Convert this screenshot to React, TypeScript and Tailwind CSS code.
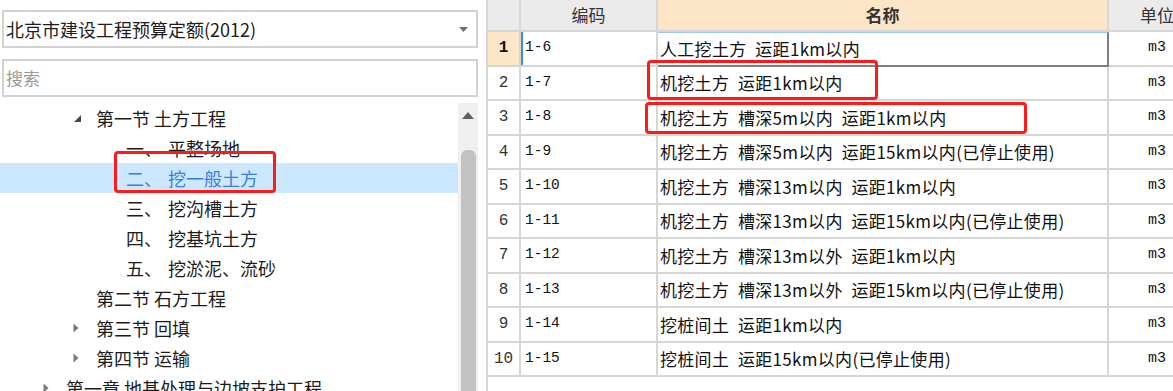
import React from 'react'

// 左侧定额树 + 右侧定额子目表
const cjk = "font-['Noto_Sans_CJK_SC','Noto_Sans',sans-serif]"
const mono = "font-['Liberation_Mono','Noto_Sans_CJK_SC',monospace]"

interface TreeItem {
  indent: number
  arrow?: 'open' | 'closed'
  prefix?: string
  label: string
  selected?: boolean
}

const tree: TreeItem[] = [
  { indent: 96, arrow: 'open', label: '第一节 土方工程' },
  { indent: 126, prefix: '一、', label: '平整场地' },
  { indent: 126, prefix: '二、', label: '挖一般土方', selected: true },
  { indent: 126, prefix: '三、', label: '挖沟槽土方' },
  { indent: 126, prefix: '四、', label: '挖基坑土方' },
  { indent: 126, prefix: '五、', label: '挖淤泥、流砂' },
  { indent: 96, label: '第二节 石方工程' },
  { indent: 96, arrow: 'closed', label: '第三节 回填' },
  { indent: 96, arrow: 'closed', label: '第四节 运输' },
  { indent: 66, arrow: 'closed', label: '第一章 地基处理与边坡支护工程' },
]

const rows = [
  ['1-6', '人工挖土方 运距1km以内'],
  ['1-7', '机挖土方 运距1km以内'],
  ['1-8', '机挖土方 槽深5m以内 运距1km以内'],
  ['1-9', '机挖土方 槽深5m以内 运距15km以内(已停止使用)'],
  ['1-10', '机挖土方 槽深13m以内 运距1km以内'],
  ['1-11', '机挖土方 槽深13m以内 运距15km以内(已停止使用)'],
  ['1-12', '机挖土方 槽深13m以外 运距1km以内'],
  ['1-13', '机挖土方 槽深13m以外 运距15km以内(已停止使用)'],
  ['1-14', '挖桩间土 运距1km以内'],
  ['1-15', '挖桩间土 运距15km以内(已停止使用)'],
]

function TreeRow({ item }: { item: TreeItem }) {
  return (
    <div
      className={`relative h-[30px] flex items-center text-[18px] whitespace-nowrap ${
        item.selected ? 'bg-[#cce8ff] text-[#3b7fd9]' : 'text-[#1c1c1c]'
      }`}
      style={{ paddingLeft: item.indent }}
    >
      {item.arrow === 'open' && (
        <svg className="absolute" style={{ left: item.indent - 23, top: 11 }} width="9" height="9" viewBox="0 0 9 9">
          <path d="M8 1 L8 8 L1 8 Z" fill="#4a4a4a" />
        </svg>
      )}
      {item.arrow === 'closed' && (
        <svg className="absolute" style={{ left: item.indent - 23, top: 10 }} width="6" height="10" viewBox="0 0 6 10">
          <path d="M0.5 0.5 L5.5 5 L0.5 9.5 Z" fill="#7a7a7a" />
        </svg>
      )}
      {item.prefix && <span className="w-[42px]">{item.prefix}</span>}
      <span>{item.label}</span>
    </div>
  )
}

export default function App() {
  return (
    <div className={`w-[1173px] h-[391px] overflow-hidden bg-white flex ${cjk}`}>
      {/* 左侧面板 */}
      <div className="w-[488px] shrink-0 flex flex-col">
        <div className="ml-[2px] mt-[10px] w-[476px] h-[38px] border-2 border-[#d2d2d2] flex items-center justify-between pl-[2px] pr-[8px]">
          <span className="text-[18px] text-[#1c1c1c] whitespace-nowrap">北京市建设工程预算定额(2012)</span>
          <svg width="9" height="5" viewBox="0 0 9 5">
            <path d="M0 0 L9 0 L4.5 5 Z" fill="#707070" />
          </svg>
        </div>
        <div className="ml-[2px] mt-[11px] w-[476px] h-[38px] border-2 border-[#d2d2d2] flex items-center pl-[2px]">
          <span className="text-[17px] text-[#9a9a9a]">搜索</span>
        </div>
        <div className="mt-[6px] flex flex-1 min-h-0">
          <div className="relative w-[458px] overflow-hidden">
            {tree.map((t, i) => (
              <TreeRow key={i} item={t} />
            ))}
            <div className="absolute left-[114px] top-[48px] w-[162px] h-[42px] border-[3px] border-[#ff1a1a] rounded-[4px]" />
          </div>
          <div className="w-[20px] bg-[#f0f0f0] flex flex-col items-center">
            <div className="h-[25px] w-full flex items-center justify-center">
              <svg width="12" height="7" viewBox="0 0 12 7">
                <path d="M0 7 L6 0 L12 7 Z" fill="#606060" />
              </svg>
            </div>
            <div className="mt-[22px] w-[15px] flex-1 bg-[#c2c2c2] rounded-t-[6px]" />
          </div>
        </div>
      </div>

      {/* 右侧表格 */}
      <div className="relative flex-1 overflow-hidden border-l-2 border-[#d6d6d6] -ml-[2px]">
        <div className="grid grid-cols-[33px_137px_451px_96px] grid-rows-[32px_repeat(10,34.5px)] w-[717px] text-[#111]">
          <div className="bg-[#ebebeb] border-r-2 border-b-2 border-[#d6d6d6]" />
          <div className="bg-[#ebebeb] border-r-2 border-b-2 border-[#d6d6d6] flex items-center justify-center text-[17px] text-[#333]">编码</div>
          <div className="bg-[#fde5c8] border-r-2 border-b-2 border-[#d6d6d6] flex items-center justify-center text-[17px] font-bold text-[#333]">名称</div>
          <div className="bg-[#ebebeb] border-b-2 border-[#d6d6d6] flex items-center justify-center text-[17px] text-[#333]">单位</div>

          {rows.map(([code, name], i) => {
            const first = i === 0
            return (
              <React.Fragment key={code}>
                <div
                  className={`border-r-2 border-b-2 border-[#d6d6d6] flex items-center justify-center text-[16px] ${mono} ${
                    first ? 'bg-[#fde5c8] font-bold' : 'bg-white text-[#333]'
                  }`}
                >
                  {i + 1}
                </div>
                <div
                  className={`border-r-2 border-b-2 border-[#d6d6d6] flex items-center pl-[4px] text-[14.5px] ${mono} ${
                    first ? 'shadow-[inset_2px_0_0_#3b8de0]' : ''
                  }`}
                >
                  {code}
                </div>
                <div
                  className={`border-r-2 border-b-2 flex items-center pl-[2px] text-[17px] tracking-[0.3px] whitespace-nowrap ${
                    first
                      ? 'border-t border-t-[#9cc8ef] border-r-[#7e7e7e] border-b-[#7e7e7e]'
                      : 'border-[#d6d6d6]'
                  }`}
                >
                  {name.replace(/ /g, '\u2002')}
                </div>
                <div className={`border-b-2 border-[#d6d6d6] flex items-center justify-center text-[15px] ${mono}`}>m3</div>
              </React.Fragment>
            )
          })}
        </div>
        <div className="absolute left-[159px] top-[60px] w-[231px] h-[40px] border-[3px] border-[#ff1a1a] rounded-[4px]" />
        <div className="absolute left-[157px] top-[102px] w-[382px] h-[32px] border-[3px] border-[#ff1a1a] rounded-[4px]" />
      </div>
    </div>
  )
}
